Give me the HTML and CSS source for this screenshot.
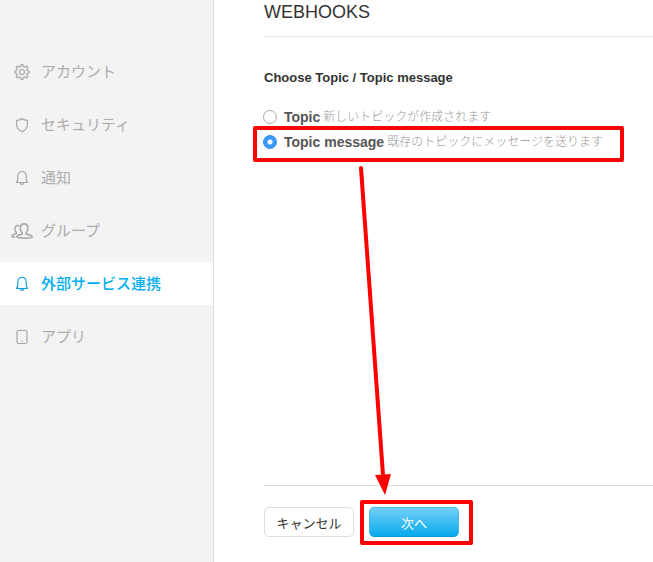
FILE: index.html
```html
<!DOCTYPE html>
<html lang="ja">
<head>
<meta charset="utf-8">
<meta name="viewport" content="width=device-width, initial-scale=1">
<title>Webhooks</title>
<link rel="stylesheet" href="styles.css">
</head>
<body>
<div class="page">
  <nav class="sidebar">
    <a class="nav-item" href="#account">
      <svg class="icon" viewBox="0 0 24 20"><path d="M10.6 4.6 L11 2.7 H13 L13.4 4.6 L14.8 5.2 L16.5 4.1 L17.9 5.5 L16.8 7.2 L17.4 8.6 L19.3 9 V11 L17.4 11.4 L16.8 12.8 L17.9 14.5 L16.5 15.9 L14.8 14.8 L13.4 15.4 L13 17.3 H11 L10.6 15.4 L9.2 14.8 L7.5 15.9 L6.1 14.5 L7.2 12.8 L6.6 11.4 L4.7 11 V9 L6.6 8.6 L7.2 7.2 L6.1 5.5 L7.5 4.1 L9.2 5.2 Z"/><circle cx="12" cy="10" r="2.5"/></svg>
      <span>アカウント</span></a>
    <a class="nav-item" href="#security">
      <svg class="icon" viewBox="0 0 24 20"><path d="M12 3.5 C10.5 5 8.7 5.4 6.6 5.4 V9.5 C6.6 13 9 15.4 12 16.6 C15 15.4 17.4 13 17.4 9.5 V5.4 C15.3 5.4 13.5 5 12 3.5 Z"/></svg>
      <span>セキュリティ</span></a>
    <a class="nav-item" href="#notice">
      <svg class="icon" viewBox="0 0 24 20"><path d="M6.5 14.5 C8 13 7.8 11.5 7.8 8.3 C7.8 5.2 9.5 3.5 12 3.5 C14.5 3.5 16.2 5.2 16.2 8.3 C16.2 11.5 16 13 17.5 14.5 Z M10.2 14.8 C10.4 17 13.6 17 13.8 14.8"/></svg>
      <span>通知</span></a>
    <a class="nav-item" href="#group">
      <svg class="icon" viewBox="0 0 24 20"><path class="bold" d="M12.3 13 C12.3 12 11.9 11.5 11.2 10.5 C10.3 9 10.2 7.5 10.4 6 C10.7 3.8 12.2 2.8 14.1 2.8 C16 2.8 17.5 3.8 17.8 6 C18 7.5 17.9 9 17 10.5 C16.3 11.5 15.9 12 15.9 13 C18.2 14 22.4 14.1 22.4 15.8 C22.4 17.6 6.7 17.6 6.7 15.8 C6.7 14.1 10 14 12.3 13 Z M8.8 4.7 C6.8 4 5.2 5.1 5 7.2 C4.9 8.7 5.1 10 6 11 C6.5 11.7 6.4 12.5 5.7 12.9 C4 13.5 1.8 13.8 1.8 15 C1.8 15.7 3 16 4.6 16.1"/></svg>
      <span>グループ</span></a>
    <a class="nav-item active" href="#services" aria-current="page">
      <svg class="icon" viewBox="0 0 24 20"><path d="M6.5 14.5 C8 13 7.8 11.5 7.8 8.3 C7.8 5.2 9.5 3.5 12 3.5 C14.5 3.5 16.2 5.2 16.2 8.3 C16.2 11.5 16 13 17.5 14.5 Z M10.2 14.8 C10.4 17 13.6 17 13.8 14.8"/></svg>
      <span>外部サービス連携</span></a>
    <a class="nav-item" href="#apps">
      <svg class="icon" viewBox="0 0 24 20"><rect x="7" y="3.5" width="10" height="13" rx="1.8"/><path d="M11.8 14 H12.2"/></svg>
      <span>アプリ</span></a>
  </nav>
  <main class="content">
    <h1 class="title">WEBHOOKS</h1>
    <form class="form">
      <fieldset class="options">
        <legend class="legend">Choose Topic / Topic message</legend>
        <label class="option"><input class="radio" type="radio" name="kind" value="topic"><strong class="name">Topic</strong><span class="hint">新しいトピックが作成されます</span></label>
        <label class="option"><input class="radio" type="radio" name="kind" value="message" checked><strong class="name">Topic message</strong><span class="hint">既存のトピックにメッセージを送ります</span></label>
      </fieldset>
      <div class="actions">
        <button class="button" type="button">キャンセル</button>
        <button class="button primary" type="submit">次へ</button>
      </div>
    </form>
  </main>
  <svg class="callouts" width="653" height="562" viewBox="0 0 653 562" aria-hidden="true">
    <rect x="255" y="128" width="367" height="32"/>
    <rect x="362" y="502" width="109" height="41"/>
    <path class="shaft" d="M361 168 L383 475"/>
    <path class="head" d="M375 475 L391 474 L385 495 Z"/>
  </svg>
</div>
</body>
</html>
```
FILE: styles.css
```css
* {
  box-sizing: border-box;
}

body {
  margin: 0;
  background: #fff;
  color: #333;
  font-family: "Liberation Sans", "Noto Sans CJK JP", sans-serif;
}

.page {
  position: relative;
  display: flex;
  min-height: 100vh;
}

.sidebar {
  display: flex;
  flex: 0 0 214px;
  flex-direction: column;
  gap: 10px;
  padding-top: 50px;
  border-right: 1px solid #e0e0e0;
  background: #f3f3f3;
}

.nav-item {
  display: flex;
  align-items: center;
  gap: 7px;
  height: 43px;
  padding: 0 10px;
  color: #acacac;
  font-size: 15px;
  line-height: 22px;
  text-decoration: none;
}

.nav-item.active {
  background: #fff;
  color: #00aeef;
  font-weight: 500;
}

.icon {
  width: 24px;
  height: 20px;
  fill: none;
  stroke: #a6a6a6;
  stroke-width: 1.2;
  stroke-linejoin: round;
  stroke-linecap: round;
}

.icon .bold {
  stroke-width: 1.5;
}

.active .icon {
  stroke: #1a9fdf;
}

.content {
  display: flex;
  flex: 1;
  flex-direction: column;
  min-width: 0;
  padding-left: 50px;
}

.title {
  margin: 0;
  padding: 2px 0 14px;
  border-bottom: 1px solid #ebebeb;
  font-size: 18px;
  font-weight: 400;
  line-height: 20px;
}

.form {
  display: flex;
  flex: 1;
  flex-direction: column;
  justify-content: space-between;
}

.options {
  margin: 0;
  padding: 33px 0 0;
  border: 0;
}

.legend {
  float: left;
  width: 100%;
  margin-bottom: 18px;
  padding: 0;
  font-size: 13px;
  font-weight: 700;
  line-height: 16px;
}

.option {
  display: flex;
  clear: both;
  align-items: center;
  height: 25px;
  line-height: 20px;
  white-space: nowrap;
}

.radio {
  width: 14px;
  height: 14px;
  margin: 0 7px 0 -1px;
  border: 1px solid #a8a8a8;
  border-radius: 50%;
  appearance: none;
  background: #fff;
}

.radio:checked {
  border-color: #338cf0;
  background: radial-gradient(circle, #fff 2px, #3b99fc 3px);
}

.name {
  margin-right: 3px;
  color: #555;
  font-size: 14px;
}

.hint {
  color: #999;
  font-size: 12px;
  font-weight: 300;
}

.actions {
  display: flex;
  gap: 15px;
  padding: 21px 0 25px;
  border-top: 1px solid #ddd;
}

.button {
  width: 90px;
  height: 30px;
  padding: 0;
  border: 1px solid #ddd;
  border-radius: 5px;
  background: #fff;
  color: #333;
  font-family: inherit;
  font-size: 13px;
}

.button.primary {
  border-color: #4bb8e6;
  border-bottom-color: #0795d5;
  background: linear-gradient(#72d0f6, #08aaec);
  color: #fff;
}

.callouts {
  position: absolute;
  top: 0;
  left: 0;
  fill: none;
  stroke: #f00;
  stroke-width: 4;
  stroke-linejoin: round;
  stroke-linecap: round;
  pointer-events: none;
}

.callouts .head {
  fill: #f00;
  stroke: none;
}
```
